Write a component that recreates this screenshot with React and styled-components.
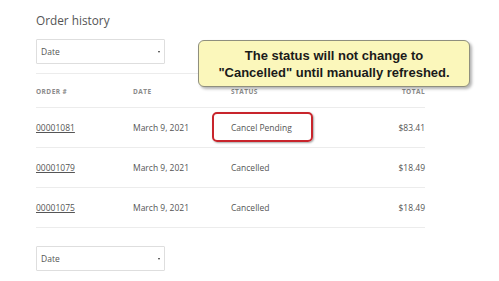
import React from "react";
import styled, { createGlobalStyle } from "styled-components";

const GlobalStyle = createGlobalStyle`
  body {
    margin: 0;
    background: #ffffff;
    font-family: "Open Sans", "Liberation Sans", sans-serif;
  }
`;

const orders = [
  { id: "00001081", date: "March 9, 2021", status: "Cancel Pending", total: "$83.41", flagged: true },
  { id: "00001079", date: "March 9, 2021", status: "Cancelled", total: "$18.49" },
  { id: "00001075", date: "March 9, 2021", status: "Cancelled", total: "$18.49" },
];

function DateSelect() {
  return (
    <SelectBox>
      <span>Date</span>
      <Caret />
    </SelectBox>
  );
}

function App() {
  return (
    <>
      <GlobalStyle />
      <Page>
        <Title>Order history</Title>
        <DateSelect />
        <Table>
          <HeaderRow>
            <HeadCell>Order #</HeadCell>
            <HeadCell>Date</HeadCell>
            <HeadCell>Status</HeadCell>
            <HeadCell right>Total</HeadCell>
          </HeaderRow>
          {orders.map((o) => (
            <Row key={o.id}>
              <OrderLink>{o.id}</OrderLink>
              <Cell>{o.date}</Cell>
              <Cell>
                {o.flagged ? <Highlight>{o.status}</Highlight> : o.status}
              </Cell>
              <Cell right>{o.total}</Cell>
            </Row>
          ))}
        </Table>
        <BottomSelect>
          <DateSelect />
        </BottomSelect>
        <Callout>
          The status will not change to
          <br />
          "Cancelled" until manually refreshed.
        </Callout>
      </Page>
    </>
  );
}

const Page = styled.div`
  position: relative;
  width: 389px;
  padding: 10px 0 0 36px;
  height: 271px;
`;

const Title = styled.h1`
  margin: 0 0 9px 0;
  font-size: 11.8px;
  line-height: 20px;
  font-weight: 400;
  color: #555555;
`;

const SelectBox = styled.div`
  width: 129px;
  height: 25px;
  box-sizing: border-box;
  border: 1px solid #dedede;
  border-radius: 1px;
  display: flex;
  align-items: center;
  justify-content: space-between;
  padding: 0 4px 0 4px;
  font-size: 8.5px;
  color: #555555;
`;

const Caret = styled.span`
  width: 0;
  height: 0;
  border-left: 1.5px solid transparent;
  border-right: 1.5px solid transparent;
  border-top: 2px solid #333333;
  margin-top: 1px;
`;

const Table = styled.div`
  margin-top: 9px;
  border-top: 1px solid #ececec;
`;

const HeaderRow = styled.div`
  display: grid;
  grid-template-columns: 97px 98px 1fr auto;
  align-items: center;
  height: 32px;
  padding-top: 1px;
  border-bottom: 1px solid #ececec;
`;

const HeadCell = styled.div`
  font-size: 6.5px;
  font-weight: 700;
  letter-spacing: 0.45px;
  text-transform: uppercase;
  color: #8a8a8a;
  text-align: ${(p) => (p.right ? "right" : "left")};
`;

const Row = styled.div`
  display: grid;
  grid-template-columns: 97px 98px 1fr auto;
  align-items: center;
  height: 39px;
  border-bottom: 1px solid #ececec;
`;

const Cell = styled.div`
  font-size: 8.5px;
  color: #555555;
  text-align: ${(p) => (p.right ? "right" : "left")};
`;

const OrderLink = styled.a`
  font-size: 8.5px;
  color: #555555;
  text-decoration: underline;
  justify-self: start;
`;

const Highlight = styled.span`
  position: relative;
  &::after {
    content: "";
    position: absolute;
    left: -19px;
    right: -21px;
    top: -10px;
    bottom: -9px;
    border: 2px solid #c8252c;
    border-radius: 5px;
    box-shadow: 1px 1px 2px rgba(0, 0, 0, 0.35);
  }
`;

const BottomSelect = styled.div`
  margin-top: 18px;
`;

const Callout = styled.div`
  position: absolute;
  left: 198px;
  top: 40px;
  width: 272px;
  height: 47px;
  box-sizing: border-box;
  background: #fbf7bb;
  border: 1px solid #8f8f7e;
  border-radius: 6px;
  box-shadow: 2px 2px 3px rgba(0, 0, 0, 0.3);
  display: flex;
  flex-direction: column;
  align-items: center;
  justify-content: center;
  text-align: center;
  font-family: "Liberation Sans", Arial, sans-serif;
  font-weight: 700;
  font-size: 13px;
  line-height: 17px;
  color: #1a1a1a;
`;

export default App;
